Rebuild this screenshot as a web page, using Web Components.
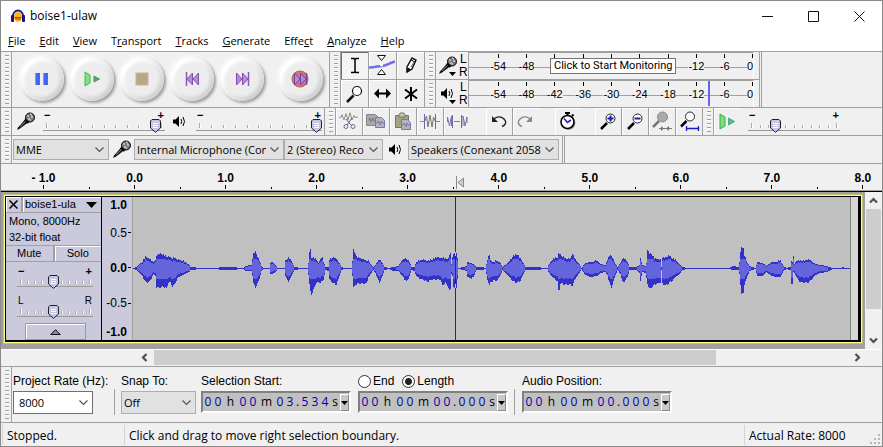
<!DOCTYPE html>
<html lang="en">
<head>
<meta charset="utf-8">
<title>boise1-ulaw</title>
<style>
  html, body { margin: 0; }
  body {
    --face: #f0f0f0; --line: #a0a0a0; --panel: #cacadc;
    --ui: "Open Sans", "Noto Sans", sans-serif;
    --plain: "Liberation Sans", Arial, sans-serif;
    font: 12px/16px var(--ui); color: #000; background: #fff;
  }
  .row { display: flex; border-top: 1px solid var(--line); min-height: 27px; }
  .row.tall { min-height: 55px; }
  .tools { display: grid; grid-template-columns: repeat(3, 27px); grid-auto-rows: 27px; gap: 1px; background: var(--line); }
  .meters { display: grid; grid-template-rows: 27px 27px; gap: 1px; background: var(--line); }
  .edit { display: flex; gap: 1px; background: var(--line); }
  .editing { display: flex; }
  .gap { width: 16px; }
  .gap.small { width: 14px; }
  .mid { display: flex; align-items: center; }
  .devices { padding-left: 1px; }
  .edge { width: 1px; border-right: 1px solid var(--line); }
  .select { display: flex; padding: 6px 0 0 1px; }
  .sep { width: 1px; height: 26px; margin: 16px 7px 0 6px; background: var(--line); }
</style>
</head>
<body>
<audio-window>
  <title-bar>boise1-ulaw</title-bar>
  <menu-bar></menu-bar>

  <div class="row tall">
    <tool-strip>
      <transport-group></transport-group>
    </tool-strip>
    <tool-strip>
      <div class="tools">
        <tool-button icon="ibeam" label="Selection tool" pressed></tool-button>
        <tool-button icon="envelope" label="Envelope tool"></tool-button>
        <tool-button icon="pencil" label="Draw tool"></tool-button>
        <tool-button icon="zoom" label="Zoom tool"></tool-button>
        <tool-button icon="shift" label="Time shift tool"></tool-button>
        <tool-button icon="star" label="Multi-tool"></tool-button>
      </div>
    </tool-strip>
    <div class="meters">
      <tool-strip><level-meter icon="mic" label="Recording level" tip="Click to Start Monitoring"></level-meter></tool-strip>
      <tool-strip><level-meter icon="speaker" label="Playback level" peak></level-meter></tool-strip>
    </div>
    <div class="edge"></div>
  </div>

  <div class="row">
    <tool-strip>
      <div class="mid" style="padding-left:4px">
        <ui-icon name="mic"></ui-icon>
        <gain-slider style="width:122px;margin:0 8px" value="96" low="−" high="+" label="Recording volume"></gain-slider>
        <ui-icon name="speaker"></ui-icon>
        <gain-slider style="width:126px;margin:0 2px 0 10px" value="100" low="−" high="+" label="Playback volume"></gain-slider>
      </div>
    </tool-strip>
    <tool-strip>
      <div class="editing">
        <div class="edit">
          <tool-button icon="cut" label="Cut"></tool-button>
          <tool-button icon="copy" label="Copy"></tool-button>
          <tool-button icon="paste" label="Paste"></tool-button>
          <tool-button icon="trim" label="Trim"></tool-button>
          <tool-button icon="silence" label="Silence"></tool-button>
        </div>
        <div class="gap"></div>
        <div class="edit">
          <tool-button icon="undo" label="Undo"></tool-button>
          <tool-button icon="redo" label="Redo"></tool-button>
        </div>
        <div class="gap"></div>
        <div class="edit"><tool-button icon="clock" label="Sync-lock tracks"></tool-button></div>
        <div class="gap small"></div>
        <div class="edit">
          <tool-button icon="zoomin" label="Zoom in"></tool-button>
          <tool-button icon="zoomout" label="Zoom out"></tool-button>
          <tool-button icon="fitsel" label="Fit selection"></tool-button>
          <tool-button icon="fitproj" label="Fit project"></tool-button>
        </div>
      </div>
    </tool-strip>
    <tool-strip open>
      <div class="mid">
        <tool-button icon="play" label="Play at speed"></tool-button>
        <gain-slider style="width:92px;margin-left:8px" value="27" low="−" high="+" label="Playback speed"></gain-slider>
      </div>
    </tool-strip>
  </div>

  <div class="row">
    <tool-strip>
      <div class="mid devices">
        <select-box style="width:96px" name="Audio host" value="MME"></select-box>
        <ui-icon name="mic" style="margin:0 3px"></ui-icon>
        <select-box style="width:150px" name="Recording device" value="Internal Microphone (Cone"></select-box>
        <select-box style="width:99px" name="Recording channels" value="2 (Stereo) Reco"></select-box>
        <ui-icon name="speaker" style="margin:0 6px"></ui-icon>
        <select-box style="width:151px;margin-right:3px" name="Playback device" value="Speakers (Conexant 20585)"></select-box>
      </div>
    </tool-strip>
    <div class="edge"></div>
  </div>

  <time-ruler></time-ruler>
  <track-view></track-view>

  <div class="row tall">
    <tool-strip open>
      <div class="select">
        <select-box style="width:96px" label="Project Rate (Hz):" value="8000" box="80" white></select-box>
        <div class="sep" style="margin-left:5px;margin-right:6px"></div>
        <select-box style="width:75px;margin-right:5px" label="Snap To:" value="Off" box="75"></select-box>
        <time-field label="Selection Start:" value="00 h 00 m 03.534 s" style="margin-right:7px"></time-field>
        <time-field radios label="Length" value="00 h 00 m 00.000 s"></time-field>
        <div class="sep"></div>
        <time-field label="Audio Position:" value="00 h 00 m 00.000 s"></time-field>
      </div>
    </tool-strip>
  </div>
  <status-bar></status-bar>
</audio-window>

<script>
const define = (name, markup, setup) => {
  customElements.define(name, class extends HTMLElement {
    constructor() {
      super();
      const t = document.createElement('template');
      t.innerHTML = typeof markup === 'function' ? '' : markup;
      this.attachShadow({ mode: 'open' }).append(t.content.cloneNode(true));
    }
    connectedCallback() {
      if (typeof markup === 'function') this.shadowRoot.innerHTML = markup(this);
      if (setup) setup(this.shadowRoot, this);
    }
  });
};

/* ---- icons ---- */
const wavelet = 'M0 7h2l1-3 2 6 2-7 2 7 2-8 2 8 2-5 1 2h3';
const ICONS = {
  logo: [14, 14, '<path d="M2 9V7a5 5.500 0 0 1 10 0v2" stroke="#1a1a8c" stroke-width="1.800" fill="none"/><ellipse cx="7" cy="8" rx="4" ry="5" fill="#ffb31a"/><path d="M3.500 8h7l-1 3h-5z" fill="#f07010"/><path d="M4 8.500h6" stroke="#e03010"/><rect x="0" y="6" width="3" height="7" rx="1" fill="#16167e"/><rect x="11" y="6" width="3" height="7" rx="1" fill="#16167e"/>'],
  mic: [19, 19, '<path d="M1 18L2 15.500 9 7.500 12 10.500 4 16.500z" fill="#111"/><path d="M4 14.500l6-5.500" stroke="#999"/><circle cx="14" cy="5.500" r="4.500" fill="#777" stroke="#000"/><path d="M11 4h2M14 2h1M12 7h2M15 5h2M14 8h1M15 3h1" stroke="#fff"/><path d="M9 7.500l3.500 3.500" stroke="#000" stroke-width="2"/>'],
  speaker: [13, 13, '<path d="M0 4.500h2.500L6 1v11L2.500 8.500H0z" fill="#000"/><path d="M8 4q1.500 2.500 0 5" stroke="#000" fill="none"/><path d="M10 2q3 4.500 0 9" stroke="#000" fill="none"/>'],
  ibeam: [27, 27, '<path d="M10 6.500h3l1 1 1-1h3M10 20.500h3l1-1 1 1h3M14 7v13" fill="none" stroke="#000" stroke-width="1.500"/>'],
  envelope: [27, 27, '<path d="M0 15.500C7 15.500 9 14 13 14S20 11 26 9.500" stroke="#7070e0" stroke-width="2.500" fill="none"/><path d="M8.500 3.500h8l-4 5zM8.500 22.500h8l-4-5z" fill="#fff" stroke="#111"/><circle cx="12.500" cy="13" r="1.500" fill="#fff"/>'],
  pencil: [27, 27, '<path d="M10 20v-5l5-9 4 2-4 9z" fill="#fff" stroke="#111" stroke-width="1.400"/><path d="M10 20l.5-4 3 1.500zM14 8l4 2" fill="#111" stroke="#111"/><path d="M14 15l3-5" stroke="#555"/>'],
  zoom: [27, 27, '<path d="M12.500 15.500L6 22" stroke="#111" stroke-width="2.500"/><circle cx="16" cy="11" r="4.500" fill="#fff" stroke="#111" stroke-width="1.200"/>'],
  shift: [27, 27, '<path d="M8 13.500h11" stroke="#000" stroke-width="2"/><path d="M5 13.500l5-5v10zM22 13.500l-5-5v10z" fill="#000"/>'],
  star: [27, 27, '<path d="M14 7v14M8 9.500l12 9M20 9.500l-12 9" stroke="#000" stroke-width="2"/>'],
  cut: [26, 27, `<path transform="translate(3 3) scale(1 .9)" d="${wavelet}" fill="none" stroke="#888"/><path d="M16 10l-5 7M10 11l5 6" stroke="#666"/><circle cx="10" cy="18.500" r="2" fill="none" stroke="#6666a8"/><circle cx="17" cy="18.500" r="2" fill="none" stroke="#6666a8"/>`],
  copy: [26, 27, '<path d="M3.500 6.500h9l3 3v8h-12z" fill="#aaa" stroke="#888"/><path d="M5 12h1l1-2 1 4 2-4 1 3h2" stroke="#777" fill="none"/><path d="M12.500 9.500h6l3 3v7h-9z" fill="#b5b5c0" stroke="#7777a8"/><path d="M13 15h1l1-2 2 4 1-4 1 2h2" stroke="#77a" fill="none"/>'],
  paste: [26, 27, '<path d="M5.500 7.500h13v12h-13z" fill="#a3a384" stroke="#777763"/><path d="M9 7l1-2h4l1 2v2H9z" fill="#c8c8a0" stroke="#777"/><path d="M11.500 11.500h6l3 3v7h-9z" fill="#b5b5c0" stroke="#7777a8"/><path d="M12 17h1l1-2 2 4 1-4 1 2h2" stroke="#77a" fill="none"/>'],
  trim: [26, 27, '<path d="M3 13.500h4M19 13.500h4" stroke="#888"/><path d="M7.500 6v15M18.500 6v15" stroke="#6868aa"/><path d="M8 13l1.500-5 1.500 11 2-12 2 12 1.500-10 1.500 4" fill="none" stroke="#777"/>'],
  silence: [26, 27, '<path d="M3.500 14V9l2 9 2-10V18M10 13.500h6M19 18V8l2 10 2-9v6" fill="none" stroke="#7777aa"/><path d="M8.500 7v13M17.500 7v13" stroke="#6868aa"/>'],
  undo: [26, 27, '<path d="M7 12c3-4 8-4 11-1s2 6-2 7.500" fill="none" stroke="#222" stroke-width="1.400"/><path d="M6 8v6h6z" fill="#222"/>'],
  redo: [26, 27, '<path d="M18 12c-3-4-8-4-11-1s-2 6 2 7.500" fill="none" stroke="#888" stroke-width="1.400"/><path d="M19 8v6h-6z" fill="#888"/>'],
  clock: [26, 27, '<circle cx="13.500" cy="15" r="7" fill="#aaa"/><circle cx="12.500" cy="14" r="6.500" fill="#fff" stroke="#000" stroke-width="1.600"/><path d="M10 5h5M12.500 5v3M17 8l1.500-1.500" stroke="#000" stroke-width="2"/><path d="M9 10.500l3.500 4L16 12" fill="none" stroke="#2020b0" stroke-width="1.600"/>'],
  zoomin: [26, 27, '<path d="M12 15L6 21" stroke="#000" stroke-width="2.500"/><circle cx="15.500" cy="10.500" r="4.500" fill="#fff" stroke="#222"/><path d="M12.500 10.500h6M15.500 7.500v6" stroke="#1a1ab4" stroke-width="2"/>'],
  zoomout: [26, 27, '<path d="M12 15L6 21" stroke="#000" stroke-width="2.500"/><circle cx="15.500" cy="10.500" r="4.500" fill="#fff" stroke="#222"/><path d="M12.500 10.500h6" stroke="#1a1ab4" stroke-width="2"/>'],
  fitsel: [26, 27, '<path d="M10 13L4 19" stroke="#777" stroke-width="2.500"/><circle cx="13.500" cy="9" r="5" fill="#aaa" stroke="#888"/><path d="M10 20.500h13" stroke="#777"/><path d="M12 18l3 2.500-3 2.500zM20 18l-3 2.500 3 2.500z" fill="#777"/>'],
  fitproj: [26, 27, '<path d="M10.500 13L5 18.500" stroke="#000" stroke-width="2.500"/><circle cx="14" cy="8.500" r="4.500" fill="#fff" stroke="#222"/><path d="M10 20.500h13M10.500 18v5M22.500 18v5" stroke="#1a1ab4" stroke-width="1.300"/>'],
  play: [26, 27, '<path d="M6 6l5 3v9l-5 3z" fill="#7fdc7f" stroke="#3fae4f"/><path d="M14.500 10l6 3.500-6 3.500z" fill="#5fc06f" stroke="#4a9"/>'],
  tpause: [26, 26, '<rect x="6" y="7" width="5" height="12" fill="#3f66f5"/><rect x="14" y="7" width="5" height="12" fill="#3f66f5"/><path d="M6.500 7v12M14.500 7v12" stroke="#8098f8"/>'],
  tplay: [26, 26, '<path d="M6 6l5 3v8l-5 3z" fill="#7fe07f" stroke="#46b84e"/><path d="M15 10l5.500 3-5.500 3z" fill="#4fae5a" stroke="#4a9a5a"/>'],
  tstop: [26, 26, '<rect x="7" y="7" width="12" height="12" fill="#b8a888" stroke="#c8b890"/>'],
  tprev: [26, 26, '<path d="M7.500 6v14" stroke="#8a58b8" stroke-width="1.500"/><path d="M13.500 7v12L8 13zM19.500 7v12l-5.500-6z" fill="#b48adc" stroke="#8050a8"/>'],
  tnext: [26, 26, '<path d="M19.500 6v14" stroke="#8a58b8" stroke-width="1.500"/><path d="M7.500 7v12l5.500-6zM13.500 7v12l5.500-6z" fill="#b48adc" stroke="#8050a8"/>'],
  trec: [26, 26, '<circle cx="12" cy="13" r="8" fill="#cf7878" stroke="#b06060"/><path d="M18.500 7v12" stroke="#7a48a8" stroke-width="1.500"/><path d="M6.500 7v12l5.500-6zM12.500 7v12l5.500-6z" fill="#b48adc" stroke="#7444a0"/>'],
  up: [17, 17, '<path d="M5 10.500L8.500 7l3.500 3.500" fill="none" stroke="#505050" stroke-width="2.200"/>'],
  down: [17, 17, '<path d="M5 6.500L8.500 10 12 6.500" fill="none" stroke="#505050" stroke-width="2.200"/>'],
  left: [17, 17, '<path d="M9.500 5L6 8.500 9.500 12" fill="none" stroke="#505050" stroke-width="2.200"/>'],
  right: [17, 17, '<path d="M7.500 5L11 8.500 7.500 12" fill="none" stroke="#505050" stroke-width="2.200"/>'],
};
define('ui-icon', el => {
  const [w, h, body] = ICONS[el.getAttribute('name')];
  return `<style>:host{display:inline-block;flex:none}svg{display:block}</style>
  <svg width="${w}" height="${h}" viewBox="0 0 ${w} ${h}" fill="none" aria-hidden="true">${body}</svg>`;
});

/* ---- frame ---- */
define('audio-window', `<style>
  :host{display:flex;flex-direction:column;box-sizing:border-box;min-height:100vh;border:1px solid #8a8a8a;background:var(--face);overflow:hidden}
</style><slot></slot>`);

define('title-bar', `<style>
  :host{display:flex;align-items:center;height:30px;background:#fff;padding-left:10px}
  span{flex:1;padding-left:5px}
  button{width:46px;height:30px;padding:0;border:0;background:none;display:grid;place-items:center}
  svg{fill:none;stroke:#111}
</style><ui-icon name="logo"></ui-icon><span><slot></slot></span>
<button aria-label="Minimize"><svg width="11" height="11"><path d="M0 5.500h11"/></svg></button>
<button aria-label="Maximize"><svg width="11" height="11"><path d="M.5.5h10v10H.5z"/></svg></button>
<button aria-label="Close"><svg width="11" height="11"><path d="M.5.5l10 10M10.500.5l-10 10"/></svg></button>`);

define('menu-bar', () => `<style>
  :host{display:flex;gap:14px;height:20px;padding-left:7px;background:#fff}
  button{border:0;padding:0;background:none;font:11px/20px var(--ui);color:#000}
</style>` + ['_File','_Edit','_View','T_ransport','_Tracks','_Generate','Effe_ct','_Analyze','_Help']
  .map(t => `<button>${t.replace(/_(.)/, '<u>$1</u>')}</button>`).join(''));

define('tool-strip', `<style>
  :host{display:flex;flex:none;background:var(--face);border-right:1px solid var(--line)}
  :host([open]){border-right:0}
  i{width:10px;border-right:1px solid var(--line);display:flex;justify-content:center;align-items:center}
  i::before{content:"";width:4px;height:calc(100% - 6px);margin-left:1px;background:repeating-linear-gradient(#a0a0a0 0 1px,#fff 1px 2px,transparent 2px 4px)}
</style><i></i><slot></slot>`);

define('transport-group', () => `<style>
  :host{display:flex;align-items:center;padding:0 3px 2px 5px}
  button{width:50px;height:50px;border:0;padding:0;background:none;display:grid;place-items:center}
  span{width:44px;height:44px;border-radius:50%;display:grid;place-items:center;
    background:radial-gradient(circle,#ededed 0 15px,transparent 19px),linear-gradient(135deg,#fff 20%,#ececec 50%,#d0d0d0 85%);
    box-shadow:2px 2px 3px #9a9a9a,-2px -2px 3px #f8f8f8}
  button:last-child{margin-left:9px}
</style>` + [['tpause','Pause'],['tplay','Play'],['tstop','Stop'],['tprev','Skip to start'],['tnext','Skip to end'],['trec','Record']]
  .map(([i, l]) => `<button aria-label="${l}"><span><ui-icon name="${i}"></ui-icon></span></button>`).join(''));

define('tool-button', el => `<style>
  :host{display:block}
  button{display:grid;place-items:center;padding:0;border:0;background:var(--face);box-shadow:inset 1px 1px #fff}
  :host([pressed]) button{background:#f4f4f4;box-shadow:inset 1px 1px #707070}
</style><button aria-label="${el.getAttribute('label')}"><ui-icon name="${el.getAttribute('icon')}"></ui-icon></button>`);

define('level-meter', el => `<style>
  :host{display:flex;height:27px;font:11px/12px var(--plain)}
  button{display:flex;align-items:center;width:32px;padding:0 0 0 2px;border:0;background:none;font:12px/13px var(--plain);color:#000}
  .pic{width:19px;height:26px;display:grid;align-content:center;justify-items:center;position:relative}
  .pic svg{position:absolute;right:1px;bottom:3px}
  .lr{display:grid;margin-left:2px;grid-template-rows:13px 13px}
  .dial{position:relative;width:284px;height:26px;border:solid var(--line);border-width:1px 0 0 1px;display:grid;grid-template-columns:15px repeat(9,2fr) 1fr;margin-right:5px;
    background:linear-gradient(var(--line),var(--line)) 0 14px/100% 1px no-repeat;border-right:1px solid #fff}
  .t{display:flex;flex-direction:column;align-items:center;gap:2px}
  .t::before{content:"";width:1px;height:4px;background:#000;margin-top:1px}
  .t.end{align-items:flex-end}
  .t span{background:var(--face)}
  .peak{position:absolute;left:84%;top:0;width:2px;height:25px;background:#6464f0}
  .tip{position:absolute;left:81px;top:5px;padding:0 2px 0 3px;border:1px solid #767676;background:#fff;font:11px/14px Roboto,var(--plain);white-space:nowrap}
</style><button aria-label="${el.getAttribute('label')}"><span class="pic"><ui-icon name="${el.getAttribute('icon')}"></ui-icon><svg width="7" height="4"><path d="M0 0h7L3.500 4z"/></svg></span>
<span class="lr"><span>L</span><span>R</span></span></button>
<div class="dial"><b></b>${[-54,-48,-42,-36,-30,-24,-18,-12,-6,0].map(n => `<div class="t${n ? '' : ' end'}"><span>${el.hasAttribute('tip') && n <= -24 && n >= -42 ? '' : n}</span></div>`).join('')}
${el.hasAttribute('peak') ? '<div class="peak"></div>' : ''}${el.hasAttribute('tip') ? `<div class="tip" role="tooltip">${el.getAttribute('tip')}</div>` : ''}</div>`);

const thumb = `url("data:image/svg+xml,%3Csvg xmlns='http://www.w3.org/2000/svg' width='11' height='14'%3E%3Cpath d='M2 .5h7l1.500 1.500v7L5.500 13.300.5 9V2z' fill='%23c8c8e6' stroke='%23222'/%3E%3Cpath d='M3 4.500h5M3 6.500h5M3 8.500h5' stroke='%23fff'/%3E%3C/svg%3E")`;
define('gain-slider', el => `<style>
  :host{display:grid;grid-template-rows:8px 14px;font:bold 11px/8px var(--plain)}
  .ends{display:flex;justify-content:space-between;padding:0 1px}
  :host([letters]) .ends{font:10px/8px var(--plain)}
  .bed{display:grid}
  .bed>*{grid-area:1/1}
  .ticks{display:flex;justify-content:space-between;align-items:flex-end;margin-top:2px;padding:0 3px 2px;border-bottom:1px solid #9a9a9a;box-sizing:border-box;height:10px}
  .ticks i{width:1px;height:3px;background:#aaa;box-shadow:1px 0 #fff}
  .ticks i:first-child,.ticks i:last-child{height:5px}
  input{appearance:none;-webkit-appearance:none;width:100%;height:14px;margin:0;background:none}
  input::-webkit-slider-thumb{-webkit-appearance:none;width:11px;height:14px;background:${thumb}}
</style><div class="ends"><span>${el.getAttribute('low')}</span><span>${el.getAttribute('high')}</span></div>
<div class="bed"><div class="ticks">${'<i></i>'.repeat(11)}</div><input type="range" value="${el.getAttribute('value')}" aria-label="${el.getAttribute('label')}"></div>`);

define('select-box', el => {
  const label = el.getAttribute('label'), w = el.getAttribute('box');
  return `<style>
  :host{display:block;flex:none}
  label{display:block;font:12px/16px var(--plain);white-space:nowrap;margin-bottom:2px}
  div{display:grid;${w ? `width:${w}px;` : ''}align-items:center}
  div>*{grid-area:1/1}
  select{appearance:none;-webkit-appearance:none;box-sizing:border-box;width:100%;height:${w ? 23 : 21}px;border:1px solid #adadad;border-radius:0;background:#e1e1e1;padding:0 17px 0 2px;font:11px/16px var(--ui);color:#000}
  :host([white]) select{background:#fff;border-color:#707070;padding-left:5px}
  svg{justify-self:end;margin-right:5px;pointer-events:none}
</style>${label ? `<label for="s">${label}</label>` : ''}
<div><select id="s" ${label ? '' : `aria-label="${el.getAttribute('name')}"`}><option>${el.getAttribute('value')}</option></select>
<svg width="9" height="6"><path d="M.5.5l4 4 4-4" fill="none" stroke="#555" stroke-width="1.200"/></svg></div>`;
});

define('time-field', el => {
  const cells = [...el.getAttribute('value')].filter(c => c !== ' ')
    .map(c => /\d/.test(c) ? `<b>${c}</b>` : `<i class="${c === '.' ? 'dot' : c}">${c}</i>`).join('');
  return `<style>
  :host{display:block;flex:none;font:12px/16px var(--plain)}
  .head{display:flex;height:16px;margin-bottom:2px;white-space:nowrap;align-items:center}
  label{display:flex;align-items:center;gap:2px;margin-right:8px}
  input{appearance:none;-webkit-appearance:none;width:13px;height:13px;margin:0;border:1px solid #333;border-radius:50%;background:#fff}
  input:checked{background:radial-gradient(circle,#222 0 3px,#fff 4px)}
  .box{display:flex;width:150px;height:22px;box-sizing:border-box;background:#c0c0c0;border:2px solid;border-color:#808080 #fff #fff #808080;text-align:center;font:12px/18px var(--ui)}
  b,i{font-weight:400;font-style:normal;width:10px;flex:none}
  b{color:#0000b4}
  .h{width:15px}.m{width:17px}.dot{width:5px}.s{width:10px}
  button{flex:1;margin-top:1px;padding:0;border:1px solid;border-color:#fff #888 #888 #fff;background:#c8c8c8;display:grid;place-items:center}
</style><div class="head">${el.hasAttribute('radios')
    ? '<label><input type="radio" name="m">End</label><label><input type="radio" name="m" checked>Length</label>'
    : `<span>${el.getAttribute('label')}</span>`}</div>
<div class="box" role="group" aria-label="${el.getAttribute('label')}">${cells}<button aria-label="Format"><svg width="7" height="4"><path d="M0 0h7L3.500 4z"/></svg></button></div>`;
});

/* ---- timeline ---- */
define('time-ruler', () => `<style>
  :host{display:block;border-top:1px solid var(--line);border-bottom:1px solid #000;box-shadow:inset 0 -1px #a0a0a0;overflow:hidden;font:bold 12px/14px var(--plain)}
  div{display:flex;position:relative;height:27px;margin-left:-3px;box-sizing:border-box;padding-top:7px}
  span{flex:0 0 10.3%;text-align:center;height:18px;
    background:linear-gradient(#000,#000) 50% 100%/1px 4px no-repeat,linear-gradient(#000,#000) 0 100%/1px 2px no-repeat}
  svg{position:absolute;left:51.8%;top:12px}
</style><div>${['- 1.0','0.0','1.0','2.0','3.0','4.0','5.0','6.0','7.0','8.0'].map(n => `<span>${n}</span>`).join('')}
<svg width="8" height="13"><path d="M.5 0v13M7.500 2v9L2 6.500z" fill="#ccc" stroke="#888"/></svg></div>`);

/* x, peak above centre, peak below centre */
const PEAKS = [[133,0,0],[136,1,1],[138,3,3],[142,6,7],[145,11,12],[147,10,13],[150,8,11],[153,6,5],[155,7,7],[156,12,18],[160,14,18],[163,13,17],[166,11,19],[168,11,13],[170,10,13],[172,9,17],[174,10,15],[177,8,9],[182,7,6],[186,5,4],[189,3,3],[190,1,1],[200,0,0],[216,0,0],[222,1,1],[235,1,1],[237,0,0],[243,0,0],[245,2,2],[251,3,2],[252,9,7],[253,14,14],[255,16,18],[257,11,14],[259,7,9],[261,2,2],[263,0,0],[269,0,0],[270,5,5],[272,6,5],[275,3,3],[277,0,0],[284,0,0],[285,7,7],[288,10,12],[290,8,9],[292,5,5],[294,1,1],[300,0,0],[307,0,0],[308,5,6],[309,16,15],[310,18,22],[311,10,25],[313,10,20],[316,8,13],[318,5,13],[322,11,12],[323,6,10],[325,1,1],[328,1,2],[329,8,10],[332,10,13],[336,9,15],[339,5,7],[341,1,1],[344,0,0],[351,0,0],[352,7,7],[353,18,18],[355,13,15],[357,10,14],[361,9,14],[366,7,14],[368,7,8],[370,4,5],[373,1,1],[375,3,4],[377,6,9],[379,8,13],[382,5,7],[384,1,1],[388,0,0],[393,1,2],[398,2,2],[402,8,7],[406,9,12],[409,6,7],[411,1,1],[414,1,2],[416,6,7],[422,8,10],[427,7,12],[432,8,10],[437,11,10],[440,9,10],[442,10,16],[445,9,13],[448,9,18],[449,13,21],[450,14,20],[451,4,5],[452,11,7],[453,13,18],[455,16,20],[456,15,18],[457,10,10],[458,0,0],[464,1,1],[466,2,2],[467,6,8],[470,5,9],[473,4,8],[476,1,1],[482,1,1],[485,0,0],[487,8,10],[489,13,16],[490,7,13],[493,6,11],[497,7,11],[500,5,6],[502,1,1],[506,4,5],[510,8,9],[513,12,12],[517,13,13],[520,9,11],[523,5,5],[525,1,1],[539,1,1],[541,0,0],[547,0,0],[548,3,3],[552,8,8],[555,10,10],[557,10,12],[558,14,21],[559,14,20],[560,13,14],[565,9,15],[570,9,15],[572,14,16],[575,8,9],[579,4,4],[581,0,0],[585,5,6],[590,6,8],[597,7,7],[600,4,4],[605,3,3],[607,8,6],[609,12,13],[611,12,18],[614,6,9],[617,1,1],[620,5,5],[622,9,12],[624,9,12],[627,6,8],[629,1,1],[636,1,1],[639,3,4],[640,9,11],[642,3,3],[645,2,4],[646,5,9],[647,18,14],[649,14,19],[651,14,18],[654,9,15],[660,8,13],[661,1,1],[662,10,14],[665,10,16],[669,12,13],[672,9,11],[675,8,8],[679,4,5],[682,1,1],[687,0,0],[728,0,0],[733,2,1],[738,1,1],[739,6,5],[740,15,15],[741,21,25],[743,19,23],[744,12,15],[747,5,7],[749,2,2],[755,0,0],[757,6,7],[762,5,7],[766,2,3],[771,6,7],[776,6,8],[780,7,8],[783,2,2],[786,0,0],[790,1,1],[791,7,14],[792,6,14],[793,11,3],[794,4,4],[796,7,8],[799,7,12],[803,7,13],[808,8,13],[812,6,9],[815,4,6],[820,3,4],[826,2,3],[832,0,0],[841,0,0],[842,1,0],[844,0,0],[850,0,0]];
const wave = () => {
  let outer = '', inner = '', k = 0;
  for (let x = 133; x < 850; x++) {
    while (PEAKS[k + 1][0] < x) k++;
    const [x0, u0, d0] = PEAKS[k], [x1, u1, d1] = PEAKS[k + 1], t = (x - x0) / (x1 - x0);
    const jag = (x * 7 % 5) < 2 ? 1 : 0;
    let u = Math.round(u0 + (u1 - u0) * t), d = Math.round(d0 + (d1 - d0) * t);
    if (u > 6) u += jag;
    if (d > 8) d += (x * 3 % 4 < 2) ? 1 : 0;
    outer += `M${x} ${268 - u}h1v${u + d + 1}h-1z`;
    const iu = Math.min(9, Math.round(u * 0.72)), id = Math.min(10, Math.round(d * 0.62));
    if (u > 1 && d > 1) inner += `M${x} ${268 - iu}h1v${iu + id + 1}h-1z`;
  }
  return `<path d="${outer}" fill="#3232c8"/><path d="${inner}" fill="#6464dc"/>`;
};

define('track-view', () => `<style>
  :host{display:grid;grid-template-columns:1fr 17px;flex:1;background:var(--face)}
  .area{background:#a0a0a0;padding:4px 4px 7px;display:grid}
  .vbar{display:flex;flex-direction:column}
  .hbar{display:flex;grid-column:1/3;padding:0 17px 0 136px;height:17px;box-shadow:inset 0 1px #fff}
  .vbar button,.hbar button{width:17px;height:17px;flex:none;border:0;padding:0;background:none}
  .rail{flex:1;display:flex}
  .rail::before{content:"";flex:0 0 81%;background:#cdcdcd;margin:1px 0}
  .vbar .rail{flex-direction:column}
  .vbar .rail::before{margin:0 1px}
</style>
<div class="area"><audio-track></audio-track></div>
<div class="vbar"><button aria-label="Scroll up"><ui-icon name="up"></ui-icon></button><div class="rail"></div><button aria-label="Scroll down"><ui-icon name="down"></ui-icon></button></div>
<div class="hbar"><button aria-label="Scroll left"><ui-icon name="left"></ui-icon></button><div class="rail"></div><button aria-label="Scroll right"><ui-icon name="right"></ui-icon></button></div>`);

define('audio-track', () => `<style>
  :host{display:grid;grid-template-columns:95px 30px minmax(0,1fr);gap:1px;background:#000;border:solid #000;border-width:1px 3px 2px 1px;box-shadow:0 0 0 1px #ffff80,0 0 0 2px #c0c070;font:11px/16px var(--plain);min-height:143px;box-sizing:border-box}
  .panel{background:var(--panel);display:flex;flex-direction:column}
  .top,.ms{display:flex;gap:2px;background:#a0a0a0;padding-bottom:1px}
  button{border:0;padding:0;background:var(--panel);font:inherit;color:#000;box-shadow:inset 1px 1px #fff;height:15px;line-height:15px}
  .close{width:15px;display:grid;place-items:center}
  .name{flex:1;display:flex;align-items:center;justify-content:space-between;padding:0 4px 0 2px}
  .info{padding:0 3px 1px;height:31px}
  .ms{padding-top:1px}
  .ms button{flex:1}
  .ms button:first-child{box-shadow:none}
  gain-slider{width:76px;margin:5px 0 0 11px}
  gain-slider+gain-slider{margin-top:8px}
  .fold{width:61px;height:17px;margin:auto auto 0 19px;border:1px solid #999;display:grid;place-items:center}
  .scale{background:var(--panel);display:grid;grid-template-rows:16fr 39fr 31fr 40fr 17fr;font-size:12px;line-height:14px}
  .scale span{display:flex;align-items:center;justify-content:flex-end;padding-right:5px;background:linear-gradient(#000,#000) calc(100% - 1px) 50%/3px 1px no-repeat}
  .scale .b{font-weight:700}
  .scale span:first-child,.scale span:last-child{background:none}
  .wave{display:grid;grid-template-columns:minmax(0,1fr) 7px;gap:1px;background:#808080;border-left:1px solid #a0a0a0;margin-left:-1px}
  .wave>svg{display:block;width:100%;height:100%;background:#c0c0c0}
  .wave>i{background:#d6d6d6}
</style>
<div class="panel">
  <div class="top"><button class="close" aria-label="Close track"><svg width="9" height="9"><path d="M.5.5l8 8M8.500.5l-8 8" stroke="#000" stroke-width="1.500"/></svg></button>
  <button class="name">boise1-ula<svg width="11" height="6"><path d="M0 0h11L5.500 6z"/></svg></button></div>
  <div class="info">Mono, 8000Hz<br>32-bit float</div>
  <div class="ms"><button>Mute</button><button>Solo</button></div>
  <gain-slider value="48" low="−" high="+" label="Gain"></gain-slider>
  <gain-slider value="48" low="L" high="R" letters label="Pan"></gain-slider>
  <button class="fold" aria-label="Collapse track"><svg width="11" height="6"><path d="M.7 5.500h9.600L5.500.7z" fill="#8a8a98" stroke="#111"/></svg></button>
</div>
<div class="scale"><span class="b">1.0</span><span>0.5</span><span class="b">0.0</span><span>-0.5</span><span class="b">-1.0</span></div>
<div class="wave"><svg viewBox="133 197 717 143" preserveAspectRatio="none" shape-rendering="crispEdges" role="img" aria-label="Waveform">${wave()}<path d="M455 197h1v143h-1z" fill="#303030"/><path d="M455 252h1v4h-1zM455 284h1v4h-1z" fill="#d8d860"/></svg><i></i></div>`);

define('status-bar', `<style>
  :host{display:flex;height:23px;border-top:1px solid var(--line)}
  span{padding:3px 0 0 4px;border-left:1px solid #d4d4d4;margin-top:2px;line-height:16px;box-sizing:border-box;height:20px}
  span:nth-of-type(1){width:122px;margin-left:1px}
  span:nth-of-type(2){flex:1}
  span:nth-of-type(3){width:126px}
  svg{align-self:flex-end;margin:0 2px 2px 0}
</style><span>Stopped.</span><span>Click and drag to move right selection boundary.</span><span>Actual Rate: 8000</span>
<svg width="10" height="10" fill="#b8b8b8"><path d="M8 0h2v2H8zM4 4h2v2H4zM8 4h2v2H8zM0 8h2v2H0zM4 8h2v2H4zM8 8h2v2H8z"/></svg>`);
</script>
</body>
</html>
